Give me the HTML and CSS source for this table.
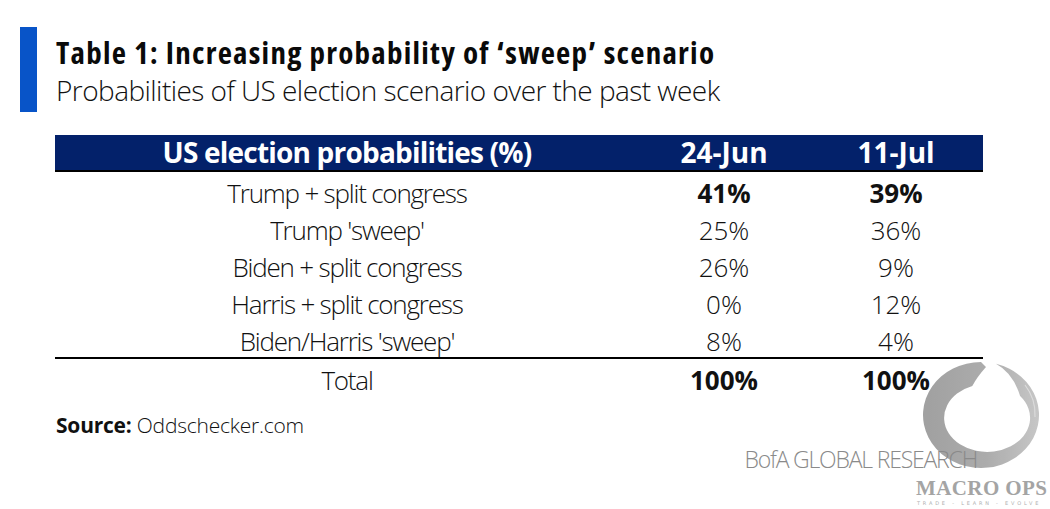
FILE: index.html
```html
<!DOCTYPE html>
<html lang="en">
<head>
<meta charset="utf-8">
<title>Table 1: Increasing probability of ‘sweep’ scenario</title>
<link rel="stylesheet" href="styles.css">
</head>
<body>
<div class="page">
  <header class="heading">
    <div class="accent"></div>
    <div class="heading-text">
      <h1 class="title">Table 1: Increasing probability of ‘sweep’ scenario</h1>
      <p class="subtitle">Probabilities of US election scenario over the past week</p>
    </div>
  </header>

  <table class="prob-table">
    <colgroup>
      <col class="c-label"><col class="c-num"><col class="c-num2">
    </colgroup>
    <thead>
      <tr><th class="th-label">US election probabilities (%)</th><th>24-Jun</th><th>11-Jul</th></tr>
    </thead>
    <tbody>
      <tr><td class="label">Trump + split congress</td><td class="b">41%</td><td class="b">39%</td></tr>
      <tr><td class="label">Trump 'sweep'</td><td>25%</td><td>36%</td></tr>
      <tr><td class="label">Biden + split congress</td><td>26%</td><td>9%</td></tr>
      <tr><td class="label">Harris + split congress</td><td>0%</td><td>12%</td></tr>
      <tr><td class="label">Biden/Harris 'sweep'</td><td>8%</td><td>4%</td></tr>
      <tr class="total"><td class="label">Total</td><td class="b">100%</td><td class="b">100%</td></tr>
    </tbody>
  </table>

  <p class="source"><strong>Source:</strong> Oddschecker.com</p>
  <p class="bofa">BofA GLOBAL RESEARCH</p>

  <div class="watermark">
    <svg class="enso" width="130" height="125" viewBox="0 0 130 125" aria-hidden="true">
      <defs>
        <linearGradient id="ensoGrad" x1="0" y1="0" x2="1" y2="0">
          <stop offset="0" stop-color="#9c9c9c"/>
          <stop offset="0.55" stop-color="#a8a8a8"/>
          <stop offset="1" stop-color="#c4c4c4"/>
        </linearGradient>
      </defs>
      <path d="M66 7 A58 53 0 1 0 81 8.8 Q98 18 105.1 41.1 A43 34 0 1 1 57.3 31 Q62 22 71 12 Z" fill="url(#ensoGrad)"/>
      <path d="M110 30 Q121 44 120 62" fill="none" stroke="#dadada" stroke-width="1.2"/>
    </svg>
    <div class="mo-name">MACRO OPS</div>
    <div class="mo-tag">TRADE - LEARN - EVOLVE</div>
  </div>
</div>
</body>
</html>
```
FILE: styles.css
```css
html, body {
  margin: 0;
  padding: 0;
  background: #ffffff;
}

.page {
  position: relative;
  isolation: isolate;
  width: 1050px;
  height: 509px;
  overflow: hidden;
  padding-top: 27px;
  box-sizing: border-box;
  font-family: "Open Sans", "Noto Sans", sans-serif;
  color: #111;
}

.heading {
  display: flex;
  margin-left: 20px;
}

.accent {
  width: 17px;
  background: #0854c8;
}

.heading-text {
  padding: 6px 0 3px 19px;
}

.title {
  margin: 0;
  font-size: 31px;
  line-height: 38px;
  font-weight: 700;
  font-stretch: 75%;
  letter-spacing: 1.25px;
  color: #0a0a0a;
}

.subtitle {
  margin: 0;
  font-size: 28px;
  line-height: 38px;
  font-weight: 300;
  letter-spacing: -0.55px;
  color: #111;
}

.prob-table {
  margin: 23px 0 0 55px;
  width: 928px;
  border-collapse: collapse;
  table-layout: fixed;
}

.c-label { width: 584px; }
.c-num { width: 170px; }
.c-num2 { width: 174px; }

.prob-table thead tr {
  height: 36px;
}

.prob-table th {
  padding: 0;
  line-height: 34px;
  vertical-align: top;
  background: #03216a;
  color: #ffffff;
  font-size: 28px;
  font-weight: 700;
  text-align: center;
  border-bottom: 2px solid #000;
}

.prob-table th.th-label {
  letter-spacing: -0.8px;
}

.prob-table tbody tr {
  height: 37px;
}

.prob-table td {
  padding: 5px 0 0 0;
  line-height: 32px;
  vertical-align: top;
  text-align: center;
  font-size: 26px;
  font-weight: 300;
  color: #111;
}

.prob-table td.label {
  letter-spacing: -1.2px;
}

.prob-table td.b {
  font-weight: 700;
}

.prob-table tr.total td {
  border-top: 2px solid #000;
}

.source {
  margin: 16px 0 0 56px;
  font-size: 21px;
  line-height: 26px;
  font-weight: 300;
  letter-spacing: -0.22px;
  color: #111;
}

.source strong {
  font-weight: 700;
}

.bofa {
  margin: 7px 0 0 0;
  width: 977px;
  text-align: right;
  font-size: 23px;
  line-height: 28px;
  font-weight: 300;
  letter-spacing: -1.2px;
  color: #8a8a8a;
}

.watermark {
  position: absolute;
  z-index: -1;
  left: 915px;
  top: 355px;
  width: 135px;
  height: 154px;
}

.enso {
  position: absolute;
  left: 0;
  top: 0;
  opacity: 0.95;
}

.mo-name {
  position: absolute;
  left: 1px;
  top: 121px;
  width: 134px;
  font-family: "Liberation Serif", "DejaVu Serif", serif;
  font-weight: 700;
  font-size: 21px;
  line-height: 24px;
  letter-spacing: 0.4px;
  color: #a4a4a4;
  white-space: nowrap;
}

.mo-tag {
  position: absolute;
  left: 2px;
  top: 145px;
  font-family: "DejaVu Sans", sans-serif;
  font-size: 5px;
  line-height: 6px;
  letter-spacing: 2.8px;
  color: #b0b0b0;
  white-space: nowrap;
}
```
